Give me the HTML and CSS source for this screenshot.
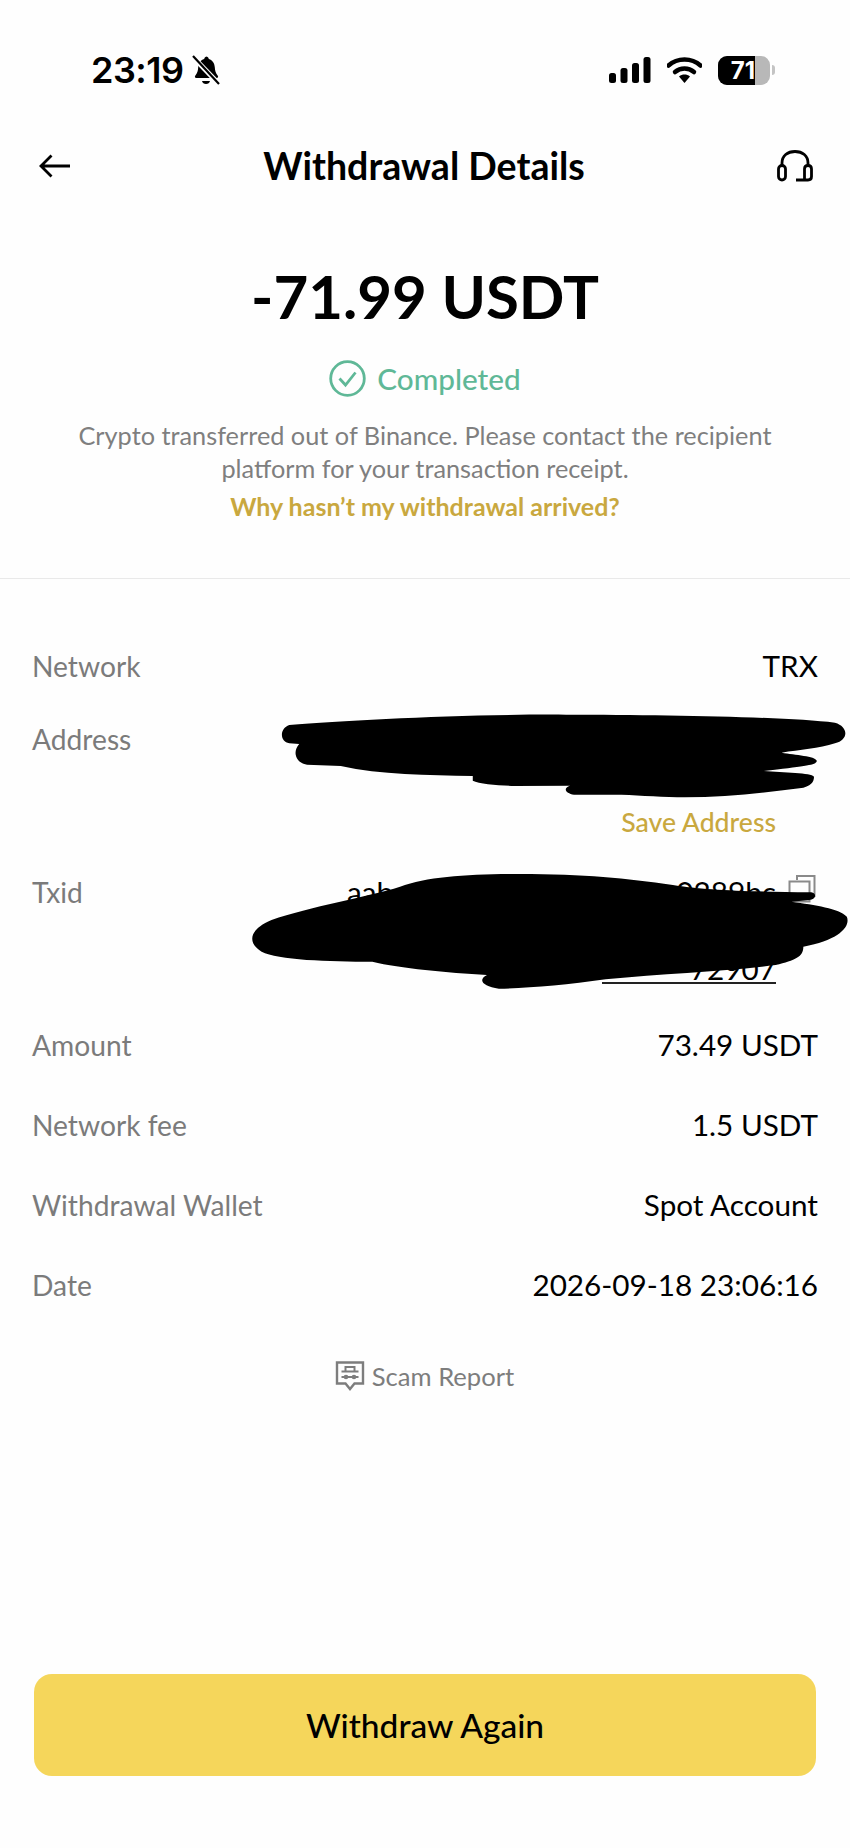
FILE: index.html
```html
<!DOCTYPE html>
<html lang="en">
<head>
    <meta charset="UTF-8">
    <meta name="viewport" content="width=device-width, initial-scale=1.0">
    <title>Withdrawal Details</title>
    <link rel="stylesheet" href="styles.css">
</head>
<body>
    <div class="status-bar">
        <div class="status-left">
            <span class="time">23:19</span>
            <svg class="icon-bell" viewBox="0 0 28 30">
                <path d="M14 1.5c1.6 0 2.6 1 2.8 2.400 4 1.200 5.700 4.400 6 8.400.2 3.400.8 6 3 8.400.7 1 .2 2.300-1.100 2.300H4.300c-1.300 0-1.800-1.300-1.100-2.300 2.200-2.400 2.800-5 3-8.400.3-4 2-7.200 6-8.400.2-1.400 1.200-2.400 2.800-2.400z" fill="#000"/>
                <path d="M10 26h8c-.4 2-2 3-4 3s-3.600-1-4-3z" fill="#000"/>
                <path d="M0 1l27 28" stroke="#fff" stroke-width="5"/>
                <path d="M1 1l26 28" stroke="#000" stroke-width="2.200"/>
            </svg>
        </div>
        <div class="status-right">
            <svg class="icon-signal" viewBox="0 0 42 26">
                <rect x="0" y="16" width="7" height="10" rx="2.500"/>
                <rect x="11.500" y="11" width="7" height="15" rx="2.500"/>
                <rect x="23" y="6" width="7" height="20" rx="2.500"/>
                <rect x="34.500" y="0" width="7" height="26" rx="2.500"/>
            </svg>
            <svg class="icon-wifi" viewBox="0 0 35 26">
                <path d="M1.500 8.500C10.500 .5 24.500 .5 33.500 8.500" fill="none" stroke="#000" stroke-width="4.500" stroke-linecap="round"/>
                <path d="M8 15c5.500-4.800 13.500-4.800 19 0" fill="none" stroke="#000" stroke-width="4.500" stroke-linecap="round"/>
                <path d="M12 19.500c3.400-2.600 7.600-2.600 11 0l-5.500 6.500z" fill="#000"/>
            </svg>
            <div class="battery">
                <div class="battery-level">71</div>
            </div>
            <div class="battery-nub"></div>
        </div>
    </div>

    <header class="top-bar">
        <svg class="icon-back" viewBox="0 0 32 24">
            <path d="M31 12H2M12.500 1.500L2 12l10.500 10.500" fill="none" stroke="#000" stroke-width="2.800"/>
        </svg>
        <h1>Withdrawal Details</h1>
        <svg class="icon-headset" viewBox="0 0 36 32">
            <path d="M5 17v-4C5 5.800 10.500 1.500 18 1.500S31 5.800 31 13v4" fill="none" stroke="#000" stroke-width="2.800"/>
            <rect x="1.500" y="15.500" width="7" height="14.500" rx="3.500" fill="none" stroke="#000" stroke-width="2.800"/>
            <path d="M27.500 19c0-2 1-3.500 3.500-3.500s3.500 1.500 3.500 3.500v7.500c0 2.300-1.200 3.500-3.500 3.500H19" fill="none" stroke="#000" stroke-width="2.800"/>
            <path d="M27.500 19v11" fill="none" stroke="#000" stroke-width="2.800"/>
        </svg>
    </header>

    <section class="summary">
        <div class="amount">-71.99 USDT</div>
        <div class="state">
            <svg class="icon-check" viewBox="0 0 37 37">
                <circle cx="18.500" cy="18.500" r="16.800" fill="none" stroke="#5fb897" stroke-width="2.800"/>
                <path d="M10.500 18.500l6 6.500 10-12.500" fill="none" stroke="#5fb897" stroke-width="2.800"/>
            </svg>
            <span>Completed</span>
        </div>
        <p class="note">Crypto transferred out of Binance. Please contact the recipient platform for your transaction receipt.</p>
        <a class="help-link" href="#">Why hasn’t my withdrawal arrived?</a>
    </section>

    <section class="details">
        <div class="row row-network">
            <span class="label">Network</span>
            <span class="value">TRX</span>
        </div>
        <div class="row row-address">
            <span class="label">Address</span>
            <a class="save-link" href="#">Save Address</a>
        </div>
        <div class="row row-txid">
            <span class="label">Txid</span>
            <div class="txid">
                <div class="txid-line"><span>aab</span><span>0289bc</span></div>
                <div class="txid-end"><span>72907</span></div>
            </div>
            <svg class="icon-copy" viewBox="0 0 28 32">
                <path d="M9 6V2h17.500v20H22" fill="none" stroke="#8a8a8a" stroke-width="2"/>
                <rect x="1.500" y="7.500" width="20" height="20" fill="none" stroke="#8a8a8a" stroke-width="2"/>
            </svg>
        </div>
        <div class="row">
            <span class="label">Amount</span>
            <span class="value">73.49 USDT</span>
        </div>
        <div class="row">
            <span class="label">Network fee</span>
            <span class="value">1.5 USDT</span>
        </div>
        <div class="row">
            <span class="label">Withdrawal Wallet</span>
            <span class="value">Spot Account</span>
        </div>
        <div class="row">
            <span class="label">Date</span>
            <span class="value">2026-09-18 23:06:16</span>
        </div>
    </section>

    <div class="scam-report">
        <svg class="icon-scam" viewBox="0 0 30 30">
            <path d="M2 1.500h26v21h-8.500L15 28l-4.500-5.500H2z" fill="none" stroke="#7d7d7d" stroke-width="2.400"/>
            <path d="M10.500 10V6h9v4M6.500 10.500h17M6.500 16h17" fill="none" stroke="#7d7d7d" stroke-width="2"/>
            <circle cx="11" cy="16" r="2.300" fill="#7d7d7d"/>
            <circle cx="19" cy="16" r="2.300" fill="#7d7d7d"/>
        </svg>
        <span>Scam Report</span>
    </div>

    <footer class="actions">
        <button>Withdraw Again</button>
    </footer>

    <!-- scribbled out in the screenshot -->
    <svg class="scribble" viewBox="0 0 1568 960" preserveAspectRatio="none">
        <path d="M150 105C300 90 600 72 850 74C1100 74 1400 80 1530 98C1565 110 1565 150 1530 160C1490 175 1440 180 1395 188C1430 195 1480 198 1484 212C1484 225 1460 228 1350 243C1400 248 1470 248 1477 260C1477 275 1470 290 1440 295C1350 308 1250 322 1150 322C1100 322 1040 316 990 314L870 314C850 310 840 295 860 287L720 288C680 286 630 282 614 272L614 258C500 255 380 255 280 228L195 224C170 220 155 190 175 162L150 160C125 155 125 115 150 105Z"/>
        <path d="M105 690C200 650 350 620 430 590C500 560 600 552 730 552C900 552 1000 565 1120 585C1200 600 1300 605 1470 607C1485 610 1482 628 1465 630L1420 635C1480 645 1540 655 1560 680C1570 710 1540 750 1450 770C1450 800 1430 810 1380 825C1250 845 1100 850 950 868C850 885 750 895 680 896C640 890 625 870 650 855C550 848 430 835 360 815C250 815 120 810 80 785C45 760 45 720 105 690Z"/>
    </svg>
</body>
</html>
```

FILE: styles.css
```css
body {
    font-family: "Lato", "Liberation Sans", sans-serif;
    margin: 0;
    padding: 0;
    background-color: #fefefe;
    color: #000;
    height: 1848px;
    overflow: hidden;
    display: flex;
    flex-direction: column;
    position: relative;
}

.status-bar {
    height: 110px;
    padding: 30px 75px 0 91px;
    display: flex;
    justify-content: space-between;
    align-items: center;
    box-sizing: border-box;
}

.status-left {
    display: flex;
    align-items: center;
    gap: 8px;
}

.time {
    font-family: "Inter", sans-serif;
    font-size: 36px;
    font-weight: 600;
    letter-spacing: -0.5px;
}

.icon-bell {
    width: 28px;
    height: 30px;
}

.status-right {
    display: flex;
    align-items: center;
}

.icon-signal {
    width: 42px;
    height: 26px;
}

.icon-wifi {
    width: 35px;
    height: 26px;
    margin-left: 16px;
}

.battery {
    width: 52px;
    height: 29px;
    margin-left: 16px;
    border-radius: 9px;
    background-color: #b8b8b8;
    overflow: hidden;
}

.battery-level {
    width: 37px;
    height: 29px;
    background-color: #000;
    color: #fff;
    font-family: "Inter", sans-serif;
    font-size: 24px;
    font-weight: 700;
    line-height: 29px;
    text-align: right;
}

.battery-nub {
    width: 3px;
    height: 10px;
    margin-left: 2px;
    border-radius: 0 3px 3px 0;
    background-color: #c4c4c4;
}

.top-bar {
    height: 112px;
    padding: 0 37px 0 39px;
    display: flex;
    justify-content: space-between;
    align-items: center;
}

.top-bar h1 {
    margin: 0 0 2px;
    font-size: 37.500px;
    font-weight: 700;
}

.icon-back {
    width: 32px;
    height: 24px;
}

.icon-headset {
    width: 36px;
    height: 32px;
}

.summary {
    text-align: center;
    padding: 32px 60px 0;
    height: 357px;
    box-sizing: border-box;
    border-bottom: 1px solid #e9e9e9;
}

.amount {
    font-size: 60px;
    font-weight: 700;
    line-height: 84px;
}

.state {
    margin-top: 22px;
    display: flex;
    justify-content: center;
    align-items: center;
    gap: 11px;
    color: #5fb897;
    font-size: 29.700px;
    font-weight: 500;
}

.icon-check {
    width: 37px;
    height: 37px;
}

.note {
    margin: 22px 0 0;
    color: #7f7f7f;
    font-size: 25.300px;
    line-height: 33px;
}

.help-link {
    display: block;
    margin-top: 5px;
    color: #c9a83f;
    font-size: 25px;
    font-weight: 700;
    line-height: 32px;
    text-decoration: none;
}

.details {
    padding: 67px 32px 0;
}

.row {
    display: flex;
    justify-content: space-between;
    align-items: flex-start;
    height: 80px;
    font-size: 29.700px;
    line-height: 40px;
    position: relative;
}

.label {
    color: #7b7b7b;
    font-size: 28.200px;
}

.row-network {
    height: 73px;
}

.row-address {
    height: 153px;
}

.save-link {
    color: #c9a83f;
    font-size: 26.600px;
    font-weight: 500;
    text-decoration: none;
    align-self: flex-end;
    margin: 0 42px 30px 0;
}

.row-txid {
    height: 153px;
}

.txid {
    width: 429px;
    margin-left: auto;
    margin-right: 42px;
}

.txid-line {
    display: flex;
    justify-content: space-between;
}

.txid-end {
    margin: 44px 0 0 auto;
    width: 174px;
    text-align: right;
    border-bottom: 2px solid #222;
    line-height: 26px;
}

.icon-copy {
    position: absolute;
    right: 2px;
    top: 2px;
    width: 28px;
    height: 32px;
}

.scam-report {
    margin-top: 16px;
    display: flex;
    justify-content: center;
    align-items: center;
    gap: 7px;
    color: #7d7d7d;
    font-size: 25.600px;
    padding-right: 1px;
}

.icon-scam {
    width: 30px;
    height: 30px;
}

.actions {
    margin-top: auto;
    padding: 0 34px 72px 34px;
}

button {
    display: block;
    width: 100%;
    height: 102px;
    border: none;
    border-radius: 18px;
    background-color: #f5d65b;
    color: #000;
    font-family: "Lato", sans-serif;
    font-size: 33.500px;
    font-weight: 500;
}

.scribble {
    position: absolute;
    left: 230px;
    top: 690px;
    width: 620px;
    height: 320px;
}
```
